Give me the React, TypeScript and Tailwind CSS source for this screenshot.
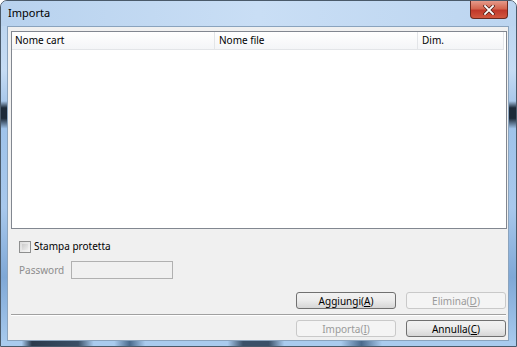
import React from "react";

const font = { fontFamily: '"Segoe UI", "Noto Sans", "Open Sans", sans-serif' };

function Btn({ label, k, disabled }: { label: string; k: string; disabled?: boolean }) {
  return (
    <div
      className={
        "w-[100px] h-[17px] rounded-[3px] border flex items-center justify-center text-[10px] leading-none " +
        (disabled
          ? "border-[#c9c9c9] bg-[#f4f4f4] text-[#9a9a9a]"
          : "border-[#707070] bg-gradient-to-b from-[#f2f2f2] via-[#ebebeb] to-[#d6d6d6] text-black")
      }
    >
      <span>
        {label}(<span className="underline">{k}</span>)
      </span>
    </div>
  );
}

export default function App() {
  return (
    <div className="w-[517px] h-[347px] bg-white" style={font}>
      <div className="relative w-[517px] h-[347px] rounded-t-[7px] border border-[#4a5a6a] bg-[linear-gradient(180deg,#b9d3ee_0%,#c6dcf4_20%,#a9c8ea_29%,#1d2a38_31%,#1d2a38_34%,#9fc3ea_37%,#a8c8ec_60%,#7fa8d6_80%,#a9cbee_100%)] flex flex-col">
        {/* title bar */}
        <div className="h-[25px] flex items-start pl-[7px] pt-[4px] text-[11px] text-black bg-[linear-gradient(90deg,#b8d2ee,#c9def5_50%,#bcd5f0)] rounded-t-[6px]">
          <span>Importa</span>
        </div>
        <div className="absolute top-0 right-[8px] w-[38px] h-[18px] rounded-b-[4px] border border-t-0 border-[#6b2a20] bg-[linear-gradient(180deg,#e59a8a_0%,#d4664f_45%,#c0392b_55%,#d2573f_100%)] flex items-center justify-center">
          <svg width="12" height="10" viewBox="0 0 12 10">
            <path d="M2 1 L10 9 M10 1 L2 9" stroke="#4a1a12" strokeWidth="3.2" strokeLinecap="square" />
            <path d="M2 1 L10 9 M10 1 L2 9" stroke="#ffffff" strokeWidth="1.8" strokeLinecap="square" />
          </svg>
        </div>
        {/* client */}
        <div className="ml-[6px] mr-[7px] flex-1 border border-[#8aa3bd] bg-[#f0f0f0] flex flex-col">
          <div className="pt-[4px] pl-[3px] pr-[1px]">
            <div className="h-[198px] border border-[#828790] bg-white flex flex-col">
              <div className="h-[18px] flex text-[10px] text-black border-b border-[#e3e5e8] bg-gradient-to-b from-white to-[#f4f5f7] mr-[2px]">
                <div className="w-[203px] border-r border-[#e3e5e8] pl-[3px] flex items-center">Nome cart</div>
                <div className="w-[203px] border-r border-[#e3e5e8] pl-[4px] flex items-center">Nome file</div>
                <div className="flex-1 border-r border-[#e3e5e8] pl-[4px] flex items-center">Dim.</div>
              </div>
            </div>
          </div>
          <div className="mt-[11px] ml-[11px] flex items-center gap-[3px] text-[10px] text-black h-[13px]">
            <div className="w-[12px] h-[12px] border border-[#8e8f8f] bg-gradient-to-br from-[#dcdcdc] to-[#f6f6f6] p-[2px]">
              <div className="w-full h-full bg-gradient-to-br from-[#cbcbcb] to-[#eeeeee]"></div>
            </div>
            <span>Stampa protetta</span>
          </div>
          <div className="mt-[8px] ml-[11px] flex items-center h-[18px] text-[10px] text-[#8d8d8d]">
            <span className="w-[52px]">Password</span>
            <div className="w-[102px] h-[18px] border border-[#b0b0b0] bg-[#f0f0f0]"></div>
          </div>
          <div className="mt-[13px] flex justify-end gap-[10px] pr-[2px]">
            <Btn label="Aggiungi" k="A" />
            <Btn label="Elimina" k="D" disabled />
          </div>
          <div className="mt-[5px] ml-[3px] mr-[2px] h-[2px] border-t border-[#a0a0a0] border-b border-b-white"></div>
          <div className="mt-[4px] flex justify-end gap-[10px] pr-[2px]">
            <Btn label="Importa" k="I" disabled />
            <Btn label="Annulla" k="C" />
          </div>
        </div>
        <div className="h-[5px] bg-[linear-gradient(90deg,#a9cbee_0%,#a9cbee_4%,#2a3a4c_6%,#3a4f66_15%,#a9cbee_18%,#a9cbee_22%,#4a6a8c_25%,#a9cbee_28%,#a9cbee_44%,#3a5068_47%,#3a5068_52%,#a9cbee_55%,#a9cbee_66%,#4a6a8c_70%,#a9cbee_74%,#a9cbee_100%)]"></div>
      </div>
    </div>
  );
}
